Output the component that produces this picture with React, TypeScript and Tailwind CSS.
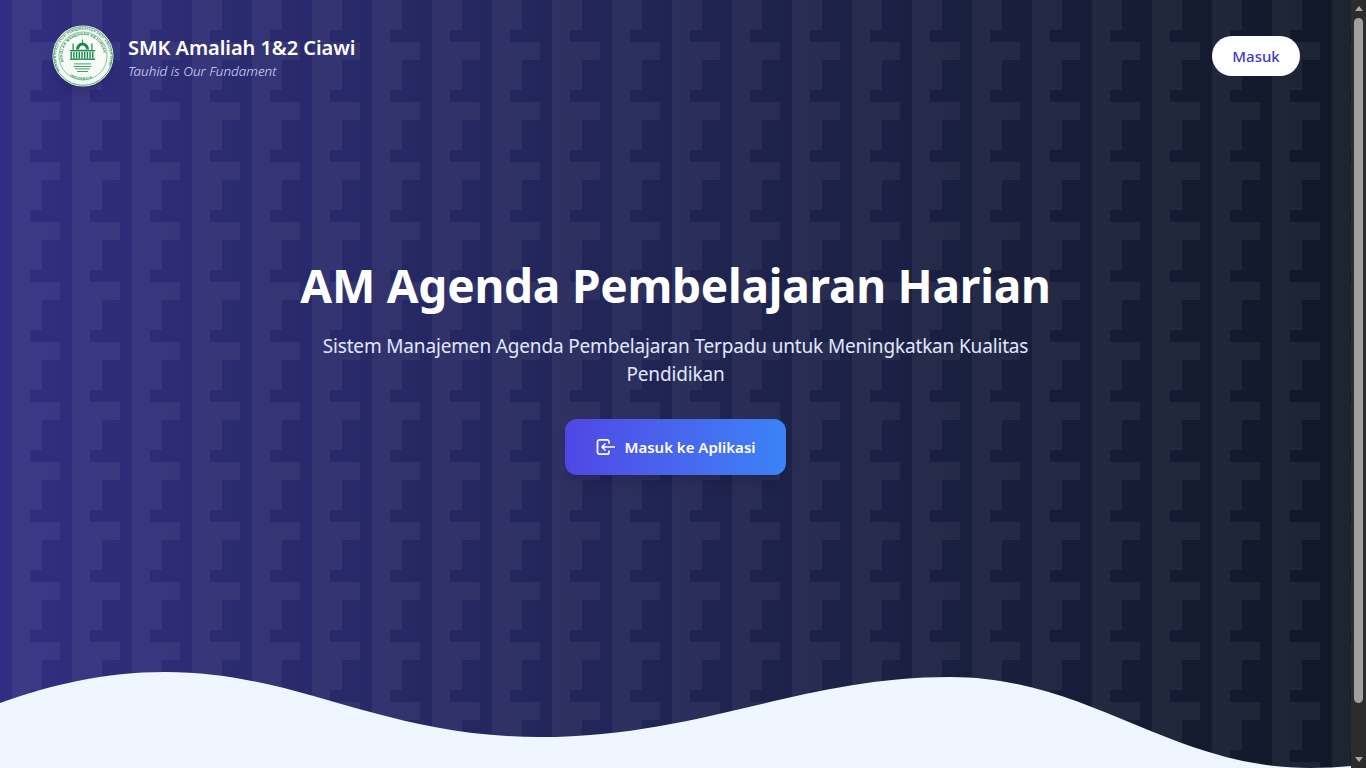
const font = "[font-family:'Noto_Sans','Open_Sans',sans-serif]";

function SchoolLogo() {
  const green = "#1a8a4c";
  return (
    <svg viewBox="0 0 62 62" className="h-[62px] w-[62px]">
      <defs>
        <path id="ring-outer" d="M8 46a27 27 0 1 1 46 0" />
        <path id="ring-inner" d="M11.500 37a20.500 20.500 0 1 1 39 0" />
        <path id="ring-bottom" d="M11.500 45a24.500 24.500 0 0 0 39 0" />
      </defs>
      <circle cx="31" cy="31" r="30.500" fill="#f6fbf8" />
      <circle cx="31" cy="31" r="29.300" fill="none" stroke={green} strokeWidth="0.700" />
      <circle cx="31" cy="31" r="24" fill="none" stroke={green} strokeWidth="0.500" />
      <text fontSize="3" fontWeight="700" fill={green} fontFamily="'Liberation Sans', sans-serif">
        <textPath href="#ring-outer" textLength="108">YAYASAN PUSAT STUDI PEMBERDAYAAN UMAT AMALIAH CIAWI</textPath>
      </text>
      <text fontSize="3.600" fontWeight="700" fill={green} fontFamily="'Liberation Sans', sans-serif">
        <textPath href="#ring-inner" textLength="68">SEKOLAH MENENGAH KEJURUAN</textPath>
      </text>
      <text fontSize="3.400" fontWeight="700" fill={green} fontFamily="'Liberation Sans', sans-serif" letterSpacing="0.500">
        <textPath href="#ring-bottom" startOffset="20%">INDONESIA</textPath>
      </text>
      <g fill={green}>
        <path d="M24 24.500c0-4 3.200-7 6.500-7s6.500 3 6.500 7z" />
        <path d="M27 24.500c0-2 1.500-4 3.500-4s3.500 2 3.500 4z" fill="#f6fbf8" />
        <rect x="30.100" y="14.500" width="0.900" height="3.500" />
        <rect x="20.500" y="18.500" width="1.200" height="7" />
        <rect x="39.300" y="18.500" width="1.200" height="7" />
        <rect x="18" y="25" width="25" height="1.400" />
        <rect x="18.500" y="27" width="1.400" height="6.500" />
        <rect x="21.200" y="27" width="1.400" height="6.500" />
        <rect x="23.900" y="27" width="1.400" height="6.500" />
        <rect x="26.600" y="27" width="1.400" height="6.500" />
        <rect x="29.300" y="27" width="1.400" height="6.500" />
        <rect x="32" y="27" width="1.400" height="6.500" />
        <rect x="34.700" y="27" width="1.400" height="6.500" />
        <rect x="37.400" y="27" width="1.400" height="6.500" />
        <rect x="40.100" y="27" width="1.400" height="6.500" />
        <rect x="18" y="33.500" width="25" height="1.400" />
        <rect x="22" y="38.500" width="17" height="0.800" />
        <rect x="21.500" y="41" width="18" height="0.800" />
        <rect x="23" y="43.500" width="15" height="0.800" />
        <rect x="25" y="46" width="11" height="0.800" />
      </g>
    </svg>
  );
}

function LoginIcon() {
  return (
    <svg viewBox="0 0 20 20" fill="none" stroke="currentColor" strokeWidth="1.700" strokeLinecap="round" strokeLinejoin="round" className="h-5 w-5">
      <path d="M14 6V4.800a2 2 0 0 0-2-2H4.500a2 2 0 0 0-2 2v10.400a2 2 0 0 0 2 2H12a2 2 0 0 0 2-2V14" />
      <path d="M19.500 10H7M10 7l-3 3 3 3" />
    </svg>
  );
}

function FakeScrollbar() {
  return (
    <aside className="flex h-full w-[15px] shrink-0 flex-col items-center bg-[#2c2c2c]">
      <div className="flex h-[17px] items-center justify-center">
        <div className="h-0 w-0 border-x-[4.500px] border-b-[5px] border-x-transparent border-b-[#a8a8a8]" />
      </div>
      <div className="mt-px h-[685px] w-[9px] rounded-full bg-[#9f9f9f]" />
      <div className="flex-1" />
      <div className="flex h-[17px] items-center justify-center">
        <div className="h-0 w-0 border-x-[4.500px] border-t-[5px] border-x-transparent border-t-[#a8a8a8]" />
      </div>
    </aside>
  );
}

export default function App() {
  return (
    <div className={`flex h-screen w-full overflow-hidden bg-[#111827] ${font}`}>
      <main className="relative h-full min-w-0 flex-1 overflow-hidden bg-gradient-to-r from-[#312e81] to-[#111827]">
        {/* tiled background */}
        <svg className="absolute inset-0 h-full w-full" aria-hidden="true">
          <defs>
            <pattern id="tile" width="60" height="60" patternUnits="userSpaceOnUse">
              <path d="M12 0H42V30H30V42H60V60H12Z" fill="#ffffff" fillOpacity="0.05" />
            </pattern>
          </defs>
          <rect width="100%" height="100%" fill="url(#tile)" />
        </svg>

        <div className="relative">
          <nav className="flex items-center justify-between pl-[52px] pr-[51px] pt-[25px]">
            <div className="flex items-center gap-[14px]">
              <div className="rounded-full shadow-lg">
                <SchoolLogo />
              </div>
              <div>
                <h2 className="text-[20px] font-semibold leading-[29px] tracking-[-0.05px] text-white">SMK Amaliah 1&amp;2 Ciawi</h2>
                <p className="text-[13.500px] font-light italic leading-[18px] text-[#d5dcff]">Tauhid is Our Fundament</p>
              </div>
            </div>
            <button type="button" className="h-10 w-[88px] rounded-full bg-white text-center text-[15px] font-medium text-[#4338ca]">
              Masuk
            </button>
          </nav>

          <section className="flex flex-col items-center pt-[168px] text-center">
            <h1 className="text-[46px] font-bold leading-[60px] tracking-[-0.25px] text-white">AM Agenda Pembelajaran Harian</h1>
            <p className="mt-[17px] max-w-[720px] text-[19px] leading-[28px] tracking-[-0.16px] text-[#e0e7ff]">
              Sistem Manajemen Agenda Pembelajaran Terpadu untuk Meningkatkan Kualitas Pendidikan
            </p>
            <button
              type="button"
              className="mt-[31px] flex h-14 w-[221px] items-center justify-center gap-[9px] rounded-xl bg-gradient-to-r from-[#4f46e5] to-[#3b82f6] text-[15px] font-semibold text-white shadow-lg"
            >
              <LoginIcon />
              Masuk ke Aplikasi
            </button>
          </section>
        </div>

        {/* wave at the foot of the hero */}
        <svg viewBox="0 0 1351 108" className="absolute bottom-0 left-0 h-[108px] w-[1351px]" aria-hidden="true">
          <path
            d="M0 43C50 25 105 12 165 12C300 12 380 77 540 77C700 77 800 17 950 17C1090 17 1170 108 1310 108C1325 108 1338 107 1351 106V108H0Z"
            fill="#eff6ff"
          />
        </svg>
      </main>
      <FakeScrollbar />
    </div>
  );
}
